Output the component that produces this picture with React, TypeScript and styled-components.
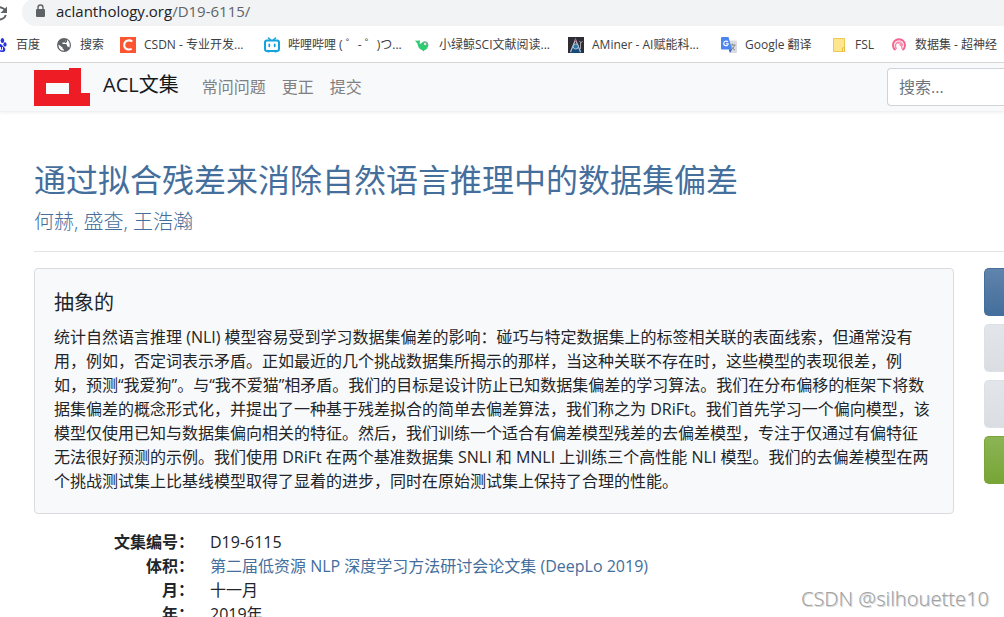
import React from 'react';
import styled, { createGlobalStyle, css } from 'styled-components';

const GlobalStyle = createGlobalStyle`
  *, *::before, *::after { box-sizing: border-box; }
  body {
    margin: 0;
    background: #fff;
    color: #212529;
    font-family: "Open Sans", "Noto Sans CJK SC", sans-serif;
    font-size: 16px;
    font-weight: 390;
    line-height: 24px;
  }
  a { color: #446e9b; text-decoration: none; }
  h2, h5, p, dl, dd, dt, ul { margin: 0; padding: 0; }
`;

const Page = styled.div`
  position: relative;
  height: 100vh;
  overflow: hidden;
`;

/* Browser chrome */

const AddressBar = styled.div`
  display: flex;
  align-items: flex-end;
  height: 26px;
  overflow: hidden;
`;

const ReloadButton = styled.button`
  width: 16px;
  height: 24px;
  margin: 0 14px 0 -8px;
  padding: 0;
  border: 0;
  background: none;
  flex: none;
  svg { display: block; }
`;

const Omnibox = styled.div`
  flex: 1;
  display: flex;
  align-items: center;
  gap: 10px;
  height: 28px;
  padding: 0 0 2px 12px;
  border-radius: 14px 0 0 14px;
  background: #f1f3f4;
  color: #202124;
  font-size: 15px;
  line-height: 26px;
  span { color: #5f6368; }
`;

const BookmarksBar = styled.nav`
  display: flex;
  align-items: center;
  height: 37px;
  padding-top: 2px;
  margin-left: -8px;
  border-bottom: 1px solid #d6d8da;
  overflow: hidden;
`;

const Bookmark = styled.a<{ $label: number }>`
  display: grid;
  grid-template-columns: 16px ${p => p.$label}px;
  gap: 8px;
  align-items: center;
  flex: none;
  margin-right: 16px;
  color: #3c4043;
  font-size: 12px;
  line-height: 16px;
  white-space: nowrap;
  svg { display: block; }
`;

/* Site navigation */

const Navbar = styled.header`
  display: flex;
  align-items: center;
  height: 49px;
  padding-left: 34px;
  background: linear-gradient(180deg, #f8f9fb, #f8f9fa);
  border-bottom: 1px solid #f0f1f2;
  box-shadow: 0 1px 3px rgba(0, 0, 0, 0.06);
`;

const Brand = styled.a`
  display: flex;
  align-items: center;
  gap: 13px;
  color: #16181b;
  font-size: 20px;
  line-height: 30px;
  svg { display: block; }
  span { padding-bottom: 4px; }
`;

const NavLinks = styled.ul`
  display: flex;
  gap: 16px;
  margin-left: 23px;
  list-style: none;
  a { color: #7f8081; }
`;

const SearchBox = styled.input`
  width: 117px;
  height: 38px;
  margin-left: auto;
  padding: 6px 11px;
  border: 1px solid #ced4da;
  border-right: 0;
  border-radius: 4px 0 0 4px;
  background: #fff;
  font: inherit;
  &::placeholder { color: #6c757d; opacity: 1; }
`;

/* Paper */

const Main = styled.main`
  padding: 48px 0 0 34px;
`;

const Title = styled.h2`
  font-size: 32px;
  line-height: 40px;
  font-weight: 390;
  margin-bottom: 8px;
`;

const Authors = styled.p`
  font-size: 20px;
  line-height: 28px;
  font-weight: 300;
  color: #446e9b;
`;

const Divider = styled.hr`
  margin: 15px 0 16px;
  border: 0;
  border-top: 1px solid #e3e4e5;
`;

const Columns = styled.div`
  display: grid;
  grid-template-columns: minmax(0, 1fr) 20px;
  gap: 30px;
  align-items: start;
`;

const AbstractCard = styled.section`
  padding: 20px 20px 20px 19px;
  border: 1px solid #d9dbde;
  border-radius: 4px;
  background: #f8f9fb;
`;

const CardTitle = styled.h5`
  margin-bottom: 8px;
  font-size: 20px;
  line-height: 28px;
  font-weight: 390;
`;

const Details = styled.dl`
  display: grid;
  grid-template-columns: 160px minmax(0, 1fr);
  column-gap: 16px;
  margin-top: 16px;
  dt { font-weight: 700; text-align: right; }
`;

const Actions = styled.div`
  display: grid;
  gap: 8px;
`;

const tones = {
  primary: css`background: linear-gradient(180deg, #6084ac, #446e9b); border-color: #446e9b;`,
  secondary: css`background: linear-gradient(180deg, #e2e5e9, #dadee3); border-color: #dce0e5;`,
  success: css`background: linear-gradient(180deg, #8cb455, #77a536); border-color: #77a536;`,
};

const ActionButton = styled.button<{ $tone: keyof typeof tones }>`
  height: 48px;
  padding: 0;
  border: 1px solid;
  border-right: 0;
  border-radius: 5px 0 0 5px;
  ${p => tones[p.$tone]}
`;

const Watermark = styled.div`
  position: absolute;
  right: 15px;
  bottom: 4px;
  color: #a2a2a2;
  font-size: 20px;
  line-height: 28px;
  font-family: "Noto Sans", sans-serif;
  font-weight: 300;
  text-shadow: 1px 1px 0 #d8d8d8;
`;

const BaiduIcon = () => (
  <svg width="16" height="16" viewBox="0 0 16 16" fill="#2932e1">
    <ellipse cx="6" cy="3.4" rx="1.8" ry="2.5" />
    <ellipse cx="10.4" cy="3.5" rx="1.8" ry="2.5" />
    <ellipse cx="2.4" cy="7" rx="1.7" ry="2.3" />
    <ellipse cx="13" cy="7.4" rx="1.6" ry="2.2" />
    <path d="M8 7c2 0 2.600 2 4.200 3.300 1.800 1.500 1.500 4.700-1.200 4.700-1.200 0-1.800-.3-3-.3s-1.800.3-3 .3c-2.700 0-3-3.200-1.200-4.700C5.400 9 6 7 8 7z" />
    <path d="M8.500 10v3h2v-3" stroke="#fff" strokeWidth=".9" fill="none" />
  </svg>
);

const GlobeIcon = () => (
  <svg width="16" height="16" viewBox="0 0 16 16">
    <circle cx="8" cy="8" r="7" fill="#5f6368" />
    <path d="M2.500 7.500 6.500 10.500v1l1.300 1v1.300C4.600 13.600 2.300 11 2.500 7.500z" fill="#fff" />
    <path d="M9.500 2.700v1.500L8 5.500H6.500V7H10l1 1v1.600h1.200l1 1.200C14.500 8 13.500 4.300 11 3v2L9.700 6H8.500z" fill="#fff" />
  </svg>
);

const CsdnIcon = () => (
  <svg width="16" height="16" viewBox="0 0 16 16">
    <path fill="#fc5531" d="M0 0h16v16H0z" />
    <path d="M12.300 4.400C9 2.300 4.300 3.600 4.200 8c0 4.200 4 5.300 7.500 3.800" fill="none" stroke="#fff" strokeWidth="2" />
  </svg>
);

const BilibiliIcon = () => (
  <svg width="16" height="16" viewBox="0 0 16 16" fill="none" stroke="#15a3dc" strokeLinecap="round">
    <path d="m4.500 1 2 2M11.500 1l-2 2" strokeWidth="1.600" />
    <rect x="1" y="3.500" width="14" height="10.500" rx="2" strokeWidth="2" />
    <path d="M5.300 7.500v1.800M10.700 7.500v1.800" strokeWidth="1.800" />
    <path d="M4 15h1M11 15h1" strokeWidth="1" />
  </svg>
);

const WhaleIcon = () => (
  <svg width="16" height="16" viewBox="0 0 16 16">
    <path d="M0 3.500l3 .3L4.500 3l.5 2.500L4.500 7C6 7 7 5 9 4.500c3-.5 4.800 1.500 4.300 4-.5 2.700-2 4.500-4 4.500L9 14.500l-1.700-1.300C4.300 12.500 3 10 2.500 6.800z" fill="#2ecb70" />
    <path d="M8 5.500C9.500 3.500 12.500 4.500 13.300 8L10.500 8.500z" fill="#8ca89a" />
    <circle cx="10" cy="7" r="1" fill="#fff" />
  </svg>
);

const AMinerIcon = () => (
  <svg width="16" height="16" viewBox="0 0 16 16">
    <path fill="#2f2c33" d="M0 0h16v16H0z" />
    <path d="M4 11h8l2 5H2z" fill="#164a78" />
    <path d="M2.500 15 7.500 2.500 12.500 15" fill="none" stroke="#b8c3d2" strokeWidth="1.200" />
    <path d="M12.500 12V5.500l-1-1.500M12.500 6l2-1.500" fill="none" stroke="#a9a2a9" strokeWidth="1" />
    <circle cx="7.800" cy="9.500" r="2.600" fill="#2c78ac" stroke="#c6d6e5" strokeWidth=".8" />
    <path d="m6 4 1.500-3L9 4.500z" fill="#a2588a" />
  </svg>
);

const TranslateIcon = () => (
  <svg width="16" height="16" viewBox="0 0 16 16">
    <path d="M6 3.500h9q1 0 1 1V15q0 1-1 1H9.500z" fill="#d9dbde" />
    <path d="M8.500 8h6M11.500 6.800V8M13.500 8c-.5 2.300-1.800 3.800-3.500 5M10.500 9.500c.8 1.700 2 2.700 3.500 3.500" stroke="#7d8790" fill="none" />
    <path d="M1 0h6.500L11 12.500H1q-1 0-1-1V1q0-1 1-1z" fill="#4a86ee" />
    <path d="m7.800 12.500 3.200 0L9 16z" fill="#3157b5" />
    <path d="M7 5C5.500 3.300 2.700 4.300 2.700 6.500c0 2.600 4.500 3 4.500.2H5" fill="none" stroke="#fff" strokeWidth="1.100" />
  </svg>
);

const FolderIcon = () => (
  <svg width="16" height="16" viewBox="0 0 16 16">
    <path d="M2.500 1.500h11v13h-11z" fill="#fee58f" stroke="#edc84e" />
    <path d="M11.500 14.500v-3.500l2-.5v4z" fill="#fff0b8" stroke="#e8be3a" />
  </svg>
);

const HyperIcon = () => (
  <svg width="16" height="16" viewBox="0 0 16 16" fill="none" stroke="#f5638f">
    <path d="M4.500 13A6 6 0 1 1 11.500 13" strokeWidth="2" />
    <path d="M5.500 12C3.500 9 4.500 5.500 7.500 5M7 6c2.300-.8 3.900.3 4.500 3M8.500 7.500c1.500.3 2.500 1.700 2.500 4.500" stroke="#f78bac" strokeWidth="1.400" />
    <path d="M6.500 4.300c2.500-.7 5 .5 5.500 4" stroke="#f9a5bf" />
  </svg>
);

const bookmarks = [
  { text: '百度', label: 24, Icon: BaiduIcon },
  { text: '搜索', label: 24, Icon: GlobeIcon },
  { text: 'CSDN - 专业开发...', label: 104, Icon: CsdnIcon },
  { text: '哔哩哔哩 ( ゜- ゜)つ...', label: 111, Icon: BilibiliIcon },
  { text: '小绿鲸SCI文献阅读...', label: 113, Icon: WhaleIcon },
  { text: 'AMiner - AI赋能科...', label: 113, Icon: AMinerIcon },
  { text: 'Google 翻译', label: 70, Icon: TranslateIcon },
  { text: 'FSL', label: 20, Icon: FolderIcon },
  { text: '数据集 - 超神经', label: 90, Icon: HyperIcon },
];

const abstractText =
  '统计自然语言推理 (NLI) 模型容易受到学习数据集偏差的影响：碰巧与特定数据集上的标签相关联的表面线索，但通常没有用，例如，否定词表示矛盾。正如最近的几个挑战数据集所揭示的那样，当这种关联不存在时，这些模型的表现很差，例如，预测“我爱狗”。与“我不爱猫”相矛盾。我们的目标是设计防止已知数据集偏差的学习算法。我们在分布偏移的框架下将数据集偏差的概念形式化，并提出了一种基于残差拟合的简单去偏差算法，我们称之为 DRiFt。我们首先学习一个偏向模型，该模型仅使用已知与数据集偏向相关的特征。然后，我们训练一个适合有偏差模型残差的去偏差模型，专注于仅通过有偏特征无法很好预测的示例。我们使用 DRiFt 在两个基准数据集 SNLI 和 MNLI 上训练三个高性能 NLI 模型。我们的去偏差模型在两个挑战测试集上比基线模型取得了显着的进步，同时在原始测试集上保持了合理的性能。';

export default function App() {
  return (
    <Page lang="zh-CN">
      <GlobalStyle />
      <AddressBar>
        <ReloadButton aria-label="重新加载">
          <svg width="16" height="20" viewBox="0 0 16 20" fill="none" stroke="#5f6368" strokeWidth="2">
            <path d="M13.300 6.500A6 6 0 1 0 13.800 11" />
            <path d="M15 2.500V9H8.500z" fill="#5f6368" stroke="none" />
          </svg>
        </ReloadButton>
        <Omnibox>
          <svg width="12" height="14" viewBox="0 0 12 14">
            <rect x="2" y="5" width="9" height="8" rx="1" fill="#5f6368" />
            <path d="M4 5.500V3.500a2.500 2.500 0 0 1 5 0v2" fill="none" stroke="#5f6368" strokeWidth="1.400" />
          </svg>
          <div>aclanthology.org<span>/D19-6115/</span></div>
        </Omnibox>
      </AddressBar>
      <BookmarksBar>
        {bookmarks.map(({ text, label, Icon }) => (
          <Bookmark key={text} href="#" $label={label}>
            <Icon />
            {text}
          </Bookmark>
        ))}
      </BookmarksBar>
      <Navbar>
        <Brand href="#">
          <svg width="56" height="38" viewBox="0 0 56 38">
            <path fill="#ee1c24" fillRule="evenodd" d="M0 2h35V0h12v25h9v13H0zM12 15v11h23V15z" />
          </svg>
          <span>ACL文集</span>
        </Brand>
        <NavLinks>
          <li><a href="#">常问问题</a></li>
          <li><a href="#">更正</a></li>
          <li><a href="#">提交</a></li>
        </NavLinks>
        <SearchBox type="text" placeholder="搜索..." aria-label="搜索" />
      </Navbar>
      <Main>
        <Title><a href="#">通过拟合残差来消除自然语言推理中的数据集偏差</a></Title>
        <Authors><a href="#">何赫</a>, <a href="#">盛查</a>, <a href="#">王浩瀚</a></Authors>
        <Divider />
        <Columns>
          <div>
            <AbstractCard>
              <CardTitle>抽象的</CardTitle>
              <p>{abstractText}</p>
            </AbstractCard>
            <Details>
              <dt>文集编号：</dt>
              <dd>D19-6115</dd>
              <dt>体积：</dt>
              <dd><a href="#">第二届低资源 NLP 深度学习方法研讨会论文集 (DeepLo 2019)</a></dd>
              <dt>月：</dt>
              <dd>十一月</dd>
              <dt>年：</dt>
              <dd>2019年</dd>
            </Details>
          </div>
          <Actions>
            <ActionButton $tone="primary" aria-label="PDF" />
            <ActionButton $tone="secondary" aria-label="引用" />
            <ActionButton $tone="secondary" aria-label="搜索" />
            <ActionButton $tone="success" aria-label="代码" />
          </Actions>
        </Columns>
      </Main>
      <Watermark>CSDN @silhouette10</Watermark>
    </Page>
  );
}
